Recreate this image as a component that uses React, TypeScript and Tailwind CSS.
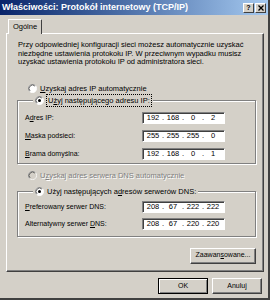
import React from 'react';

const font = { fontFamily: '"Liberation Sans", Arial, sans-serif' };

type RadioProps = { checked?: boolean; disabled?: boolean };

const Radio: React.FC<RadioProps> = ({ checked, disabled }) => (
  <svg width="9" height="9" viewBox="0 0 12 12" className="shrink-0">
    <circle cx="6" cy="6" r="5.5" fill={disabled ? '#d4d0c8' : '#fff'} stroke="#fff" />
    <path d="M2.1 9.9 A5.5 5.5 0 0 1 9.9 2.1" stroke="#808080" fill="none" />
    <path d="M2.8 9.2 A4.5 4.5 0 0 1 9.2 2.8" stroke="#404040" fill="none" />
    {checked && <circle cx="6" cy="6" r="2" fill="#000" />}
  </svg>
);

const IpBox: React.FC<{ parts: string[] }> = ({ parts }) => (
  <div className="w-[83px] h-[12px] bg-white border-t border-l border-[#808080] border-b border-b-white border-r border-r-white shadow-[inset_1px_1px_0_#404040] flex items-center pl-[2px] text-[7.5px] text-black">
    {parts.map((p, i) => (
      <React.Fragment key={i}>
        <span className="w-[16px] text-center">{p}</span>
        {i < 3 && <span className="w-[4px] text-center">.</span>}
      </React.Fragment>
    ))}
  </div>
);

const Row: React.FC<{ label: React.ReactNode; parts: string[] }> = ({ label, parts }) => (
  <div className="flex items-center justify-between h-[12px]">
    <span className="text-[7px] leading-none">{label}</span>
    <IpBox parts={parts} />
  </div>
);

const Button: React.FC<{ children: React.ReactNode; w: string; isDefault?: boolean }> = ({ children, w, isDefault }) => (
  <div
    className={
      'h-[16px] flex items-center justify-center text-[7px] bg-[#d4d0c8] ' +
      w +
      (isDefault
        ? ' border border-black shadow-[inset_1px_1px_0_#fff,inset_-1px_-1px_0_#808080]'
        : ' border-t border-l border-t-white border-l-white border-r border-b border-r-[#404040] border-b-[#404040] shadow-[inset_-1px_-1px_0_#808080]')
    }
  >
    {children}
  </div>
);

export default function App() {
  return (
    <div
      style={font}
      className="w-[270px] h-[300px] bg-[#d4d0c8] border-r-2 border-b-2 border-r-[#404040] border-b-[#404040] flex flex-col text-black overflow-hidden"
    >
      {/* title bar */}
      <div className="h-[15px] shrink-0 flex items-center justify-between pl-[2px] pr-[2px] bg-gradient-to-r from-[#0a246a] to-[#a6caf0]">
        <span className="text-white font-bold text-[9px] leading-none">
          Właściwości: Protokół internetowy (TCP/IP)
        </span>
        <div className="flex gap-[1px]">
          <div className="w-[11px] h-[10px] bg-[#d4d0c8] border-t border-l border-white border-r border-b border-r-[#404040] border-b-[#404040] flex items-center justify-center text-[7px] font-bold leading-none">
            ?
          </div>
          <div className="w-[11px] h-[10px] bg-[#d4d0c8] border-t border-l border-white border-r border-b border-r-[#404040] border-b-[#404040] flex items-center justify-center">
            <svg width="6" height="6" viewBox="0 0 6 6">
              <path d="M0.5 0.5 L5.5 5.5 M5.5 0.5 L0.5 5.5" stroke="#000" strokeWidth="1.3" />
            </svg>
          </div>
        </div>
      </div>

      {/* tabs */}
      <div className="pl-[6px] pr-[4px] pt-[3px] flex flex-col">
        <div className="flex">
          <div className="ml-[2px] w-[34px] h-[15px] border-t border-l border-white border-r border-r-[#404040] rounded-t-[1px] flex items-center justify-center text-[7.5px] relative top-[1px] bg-[#d4d0c8] z-10">
            Ogólne
          </div>
        </div>
        <div className="h-[239px] border-t border-l border-white border-r border-b border-r-[#404040] border-b-[#404040] shadow-[inset_-1px_-1px_0_#808080] flex flex-col pl-[10px] pr-[7px]">
          <p className="pt-[7px] pl-[1px] text-[7.5px] leading-[8.5px]">
            Przy odpowiedniej konfiguracji sieci możesz automatycznie uzyskać niezbędne ustawienia protokołu IP. W przeciwnym wypadku musisz uzyskać ustawienia protokołu IP od administratora sieci.
          </p>

          <div className="mt-[17px] ml-[11px] h-[10px] flex items-center gap-[3px] text-[7.5px]">
            <Radio />
            <span>
              <span className="underline">U</span>zyskaj adres IP automatycznie
            </span>
          </div>

          <fieldset className="mt-[2px] border border-[#808080] shadow-[1px_1px_0_#fff,inset_1px_1px_0_#fff] pl-[7px] pr-[30px] pb-[3px]">
            <legend className="ml-[8px] px-[2px] bg-[#d4d0c8] h-[10px] flex items-center gap-[3px] text-[7.5px]">
              <Radio checked />
              <span className="outline-1 outline-dotted outline-black px-[1px]">
                U<span className="underline">ż</span>yj następującego adresu IP:
              </span>
            </legend>
            <div className="pt-[6px] flex flex-col gap-[6px]">
              <Row label={<>A<span className="underline">d</span>res IP:</>} parts={['192', '168', '0', '2']} />
              <Row label={<><span className="underline">M</span>aska podsieci:</>} parts={['255', '255', '255', '0']} />
              <Row label={<><span className="underline">B</span>rama domyślna:</>} parts={['192', '168', '0', '1']} />
            </div>
          </fieldset>

          <div className="mt-[7px] ml-[11px] h-[10px] flex items-center gap-[3px] text-[7.5px] text-[#808080] [text-shadow:1px_1px_0_#fff]">
            <Radio disabled />
            <span>
              U<span className="underline">z</span>yskaj adres serwera DNS automatycznie
            </span>
          </div>

          <fieldset className="mt-[6px] border border-[#808080] shadow-[1px_1px_0_#fff,inset_1px_1px_0_#fff] pl-[7px] pr-[30px] pb-[6px]">
            <legend className="ml-[8px] px-[2px] bg-[#d4d0c8] h-[10px] flex items-center gap-[3px] text-[7.5px]">
              <Radio checked />
              <span>
                Użyj następujących a<span className="underline">d</span>resów serwerów DNS:
              </span>
            </legend>
            <div className="pt-[4px] flex flex-col gap-[5px]">
              <Row label={<><span className="underline">P</span>referowany serwer DNS:</>} parts={['208', '67', '222', '222']} />
              <Row label={<>Alternatywny serwer <span className="underline">D</span>NS:</>} parts={['208', '67', '220', '220']} />
            </div>
          </fieldset>

          <div className="mt-[11px] flex justify-end">
            <Button w="w-[66px]">
              Zaawan<span className="underline">s</span>owane...
            </Button>
          </div>
        </div>
      </div>

      {/* bottom buttons */}
      <div className="mt-[6px] pr-[6px] flex justify-end gap-[4px]">
        <Button w="w-[50px]" isDefault>
          OK
        </Button>
        <Button w="w-[50px]">Anuluj</Button>
      </div>
    </div>
  );
}
